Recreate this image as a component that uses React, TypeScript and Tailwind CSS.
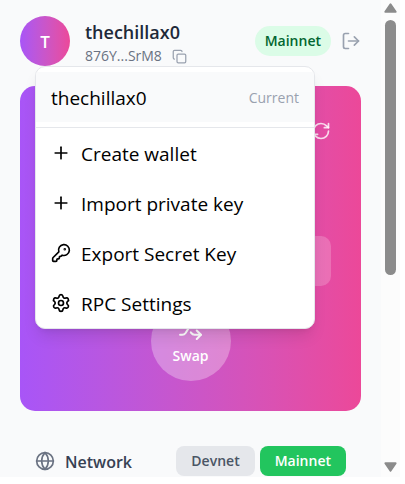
import React from "react";
import { Copy, Globe, KeyRound, LogOut, Plus, RefreshCw, Settings, Shuffle } from "lucide-react";

const actions = [
  { label: "Create wallet", Icon: Plus },
  { label: "Import private key", Icon: Plus },
  { label: "Export Secret Key", Icon: KeyRound },
  { label: "RPC Settings", Icon: Settings },
];

function AccountMenu() {
  return (
    <div
      role="menu"
      className="absolute inset-x-[15px] top-full z-10 mr-[31px] overflow-hidden rounded-[10px] border border-gray-200 bg-white pt-[5px] text-black shadow-lg"
    >
      <button role="menuitem" className="flex h-[50px] w-full items-center justify-between bg-gray-50 px-[15px]">
        <span className="pt-0.5 text-[19px] leading-7">thechillax0</span>
        <span className="pt-0.5 text-[14px] leading-5 text-gray-400">Current</span>
      </button>
      <div className="mt-[5px] border-t border-gray-200">
        {actions.map(({ label, Icon }) => (
          <button
            key={label}
            role="menuitem"
            className="flex h-[50px] w-full items-center gap-2.5 px-[15px] text-[19px] leading-7"
          >
            <Icon size={20} aria-hidden="true" />
            <span className="pt-0.5">{label}</span>
          </button>
        ))}
      </div>
    </div>
  );
}

function Header() {
  return (
    <header className="relative mt-4 flex items-center justify-between">
      <div className="flex items-center gap-[15px]">
        <button
          aria-label="Account menu"
          className="flex size-[50px] items-center justify-center rounded-full bg-linear-to-r from-[#a855f7] to-[#ec4899] pt-0.5 text-[17px] font-semibold text-white"
        >
          T
        </button>
        <div className="pt-0.5">
          <h1 className="text-[18px] leading-7 font-semibold text-gray-800">thechillax0</h1>
          <div className="flex items-center gap-2.5 text-[14px] leading-5 text-gray-500">
            876Y...SrM8
            <button aria-label="Copy address" className="text-gray-400">
              <Copy size={15} />
            </button>
          </div>
        </div>
      </div>
      <div className="flex items-center gap-2.5">
        <span className="rounded-full bg-green-100 px-2.5 py-[5px] text-[14px] leading-5 font-semibold text-green-800">
          Mainnet
        </span>
        <button aria-label="Log out" className="text-gray-400">
          <LogOut size={20} />
        </button>
      </div>
      <AccountMenu />
    </header>
  );
}

function BalanceCard() {
  return (
    <section className="mt-5 flex h-[325px] flex-col items-center rounded-[15px] bg-linear-to-r from-[#a855f7] to-[#ec4899] p-[30px] text-white">
      <button aria-label="Refresh balance" className="mt-[5px] self-end text-white/80">
        <RefreshCw size={20} />
      </button>
      <div className="mt-auto h-[50px] w-full rounded-[10px] bg-white/20" />
      <button className="mt-[15px] flex size-20 shrink-0 flex-col items-center justify-center gap-[5px] rounded-full bg-white/30 text-[14px] leading-5 font-semibold">
        <Shuffle size={25} aria-hidden="true" />
        Swap
      </button>
    </section>
  );
}

function NetworkRow() {
  return (
    <section className="mt-[35px] flex items-center justify-between px-[15px] pb-px">
      <h2 className="flex items-center gap-2.5 text-[17px] leading-7 font-semibold text-gray-700">
        <Globe size={20} className="text-gray-500" aria-hidden="true" />
        <span className="pt-0.5 text-[16px]">Network</span>
      </h2>
      <div className="flex gap-[5px] text-[14px] leading-5 font-semibold">
        <button className="rounded-[8px] bg-gray-200 px-[15px] py-[5px] text-gray-600">Devnet</button>
        <button className="rounded-[8px] bg-[#22c55e] px-[15px] py-[5px] text-white">Mainnet</button>
      </div>
    </section>
  );
}

function ScrollRail() {
  return (
    <div aria-hidden="true" className="flex w-[19px] shrink-0 flex-col items-center bg-[#fcfcfc] pt-[3px] pb-[5px]">
      <svg width="13" height="11" viewBox="0 0 13 11" fill="#8b8b8b">
        <path d="M5.7 .8a1 1 0 0 1 1.6 0l5 7.2a1 1 0 0 1-.8 1.7H1.5a1 1 0 0 1-.8-1.7z" />
      </svg>
      <div className="mt-1.5 h-[255px] w-[11px] rounded-full bg-[#8b8b8b]" />
      <svg className="mt-auto" width="13" height="11" viewBox="0 0 13 11" fill="#8b8b8b">
        <path d="M5.7 10.2a1 1 0 0 0 1.6 0l5-7.2a1 1 0 0 0-.8-1.7H1.5a1 1 0 0 0-.8 1.7z" />
      </svg>
    </div>
  );
}

export default function App() {
  return (
    <div className="bg-white pr-[5px] font-['Open_Sans',sans-serif]">
      <div className="flex">
        <main className="min-w-0 flex-1 bg-gray-50 px-5">
          <Header />
          <BalanceCard />
          <NetworkRow />
        </main>
        <ScrollRail />
      </div>
    </div>
  );
}
